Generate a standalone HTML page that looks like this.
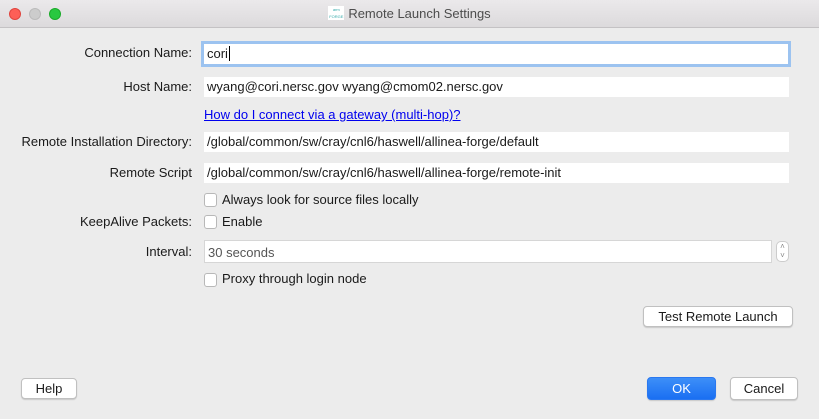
<!DOCTYPE html>
<html><head><meta charset="utf-8"><style>
*{box-sizing:border-box;margin:0;padding:0}
body{width:819px;height:419px;overflow:hidden;background:#ececec;font-family:"Liberation Sans",sans-serif;font-size:13px;color:#1a1a1a;position:relative}
.a{position:absolute}
.title{left:0;top:0;width:819px;height:28px;background:linear-gradient(#ebe9eb,#dcdadc);border-bottom:1px solid #c4c2c4;text-align:center;line-height:27px;color:#4d4d4d;font-size:13px}
.dot{top:8px;width:12px;height:12px;border-radius:50%}
.lbl{text-align:right;width:300px;left:-108px}
.inp{background:#fff;height:20px;line-height:20px;padding-left:3px}
.cb{width:13px;height:14px;background:#fff;border:1px solid #b8b8b8;border-radius:3px}
.btn{background:#fff;border:1px solid #c0c0c0;border-radius:4px;text-align:center;height:21px;line-height:19px;box-shadow:0 1px 1px rgba(0,0,0,.15)}
</style></head><body>
<div class="a title"><span style="display:inline-block;width:16px;height:14px;background:#fff;vertical-align:-2px;margin-right:4px;font-size:4px;line-height:7px;color:#3aa;text-align:center;overflow:hidden">arm<br>FORGE</span>Remote Launch Settings</div>
<div class="a dot" style="left:9px;background:#fd5f57;border:1px solid #e0443e"></div>
<div class="a dot" style="left:29px;background:#ccc;border:1px solid #bbb"></div>
<div class="a dot" style="left:49px;background:#29c840;border:1px solid #1aab29"></div>

<div class="a lbl" style="top:45px">Connection Name:</div>
<div class="a inp" style="left:201px;top:41px;width:590px;height:26px;border:3px solid #9cc3f0;line-height:20px">cori<span style="border-left:1px solid #000;margin-left:1px"></span></div>

<div class="a lbl" style="top:79px">Host Name:</div>
<div class="a inp" style="left:204px;top:77px;width:585px">wyang@cori.nersc.gov wyang@cmom02.nersc.gov</div>

<div class="a" style="left:204px;top:107px;color:#0000ee;text-decoration:underline">How do I connect via a gateway (multi-hop)?</div>

<div class="a lbl" style="top:134px">Remote Installation Directory:</div>
<div class="a inp" style="left:204px;top:132px;width:585px">/global/common/sw/cray/cnl6/haswell/allinea-forge/default</div>

<div class="a lbl" style="top:165px">Remote Script</div>
<div class="a inp" style="left:204px;top:163px;width:585px">/global/common/sw/cray/cnl6/haswell/allinea-forge/remote-init</div>

<div class="a cb" style="left:204px;top:193px"></div>
<div class="a" style="left:222px;top:192px">Always look for source files locally</div>

<div class="a lbl" style="top:214px">KeepAlive Packets:</div>
<div class="a cb" style="left:204px;top:215px"></div>
<div class="a" style="left:222px;top:214px">Enable</div>

<div class="a lbl" style="top:244px">Interval:</div>
<div class="a inp" style="left:204px;top:240px;width:568px;height:23px;line-height:23px;border:1px solid #d6d6d6;color:#555">30 seconds</div>
<div class="a" style="left:776px;top:241px;width:13px;height:21px;border:1px solid #ccc;border-radius:5px;background:#fff;font-size:8px;line-height:9px;text-align:center;color:#888">˄<br>˅</div>

<div class="a cb" style="left:204px;top:273px"></div>
<div class="a" style="left:222px;top:271px">Proxy through login node</div>

<div class="a btn" style="left:643px;top:306px;width:150px">Test Remote Launch</div>
<div class="a btn" style="left:21px;top:378px;width:56px">Help</div>
<div class="a btn" style="left:647px;top:377px;width:69px;height:23px;line-height:21px;background:linear-gradient(#3d8ff8,#1a6ff2);border-color:#2a78f0;color:#fff">OK</div>
<div class="a btn" style="left:730px;top:377px;width:68px;height:23px;line-height:21px">Cancel</div>
</body></html>
